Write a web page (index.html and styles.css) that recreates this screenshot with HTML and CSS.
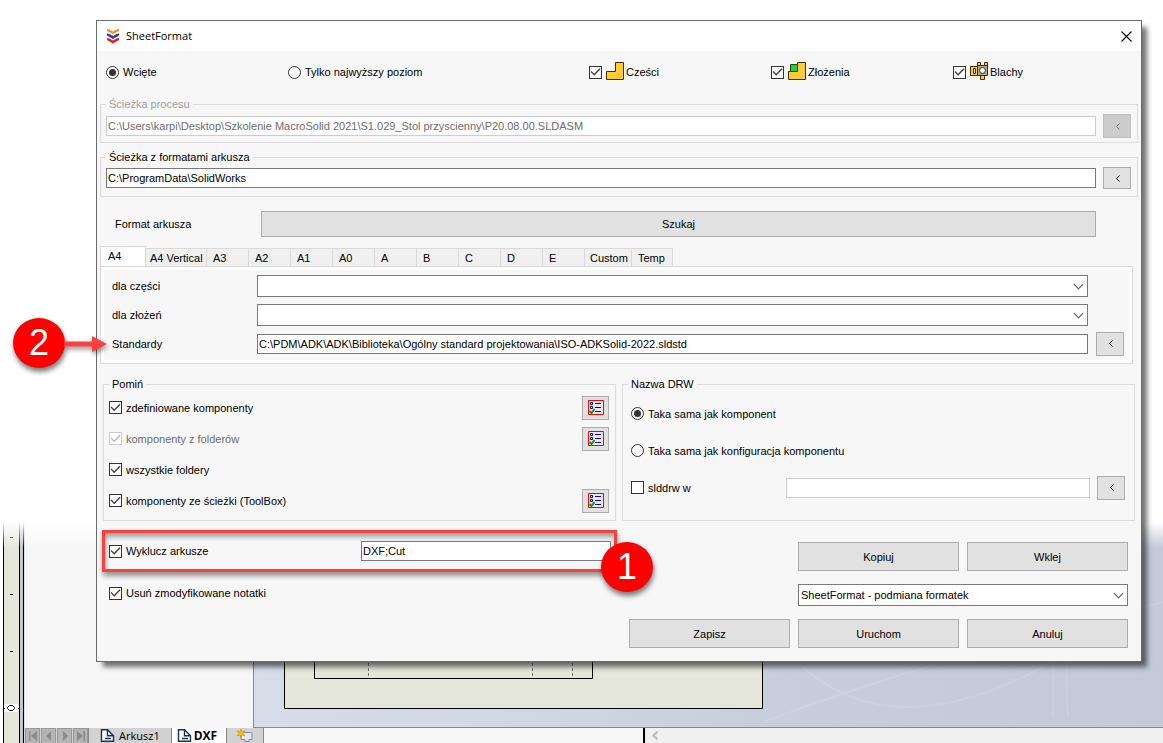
FILE: index.html
```html
<!DOCTYPE html>
<html lang="pl">
<head>
<meta charset="utf-8">
<title>SheetFormat</title>
<link rel="stylesheet" href="styles.css">
</head>
<body>
<svg class="defs" aria-hidden="true">
  <symbol id="list" viewBox="0 0 16 16">
    <path d="M.5.5h15v14H.5z" fill="#e6e6ee" stroke="#f00"/>
    <path d="M2.500 2.500h2v2h-2zM2.500 6.500h2v2h-2z" fill="#fff" stroke="#1a007a"/>
    <path d="M7 3.500h6M7 7.500h6M7 11.500h6" stroke="#1a007a"/>
    <path d="M1.500 11l2 2 3-4" fill="none" stroke="#0a9a1a" stroke-width="2"/>
  </symbol>
  <symbol id="page" viewBox="0 0 15 13">
    <path d="M1.500.7h6l6 6v5.600h-12z" fill="#fff" stroke="#1c2f55" stroke-width="1.400"/>
    <path d="M7.500.7v6h6M5 9.500h6" fill="none" stroke="#1c2f55" stroke-width="1.400"/>
  </symbol>
  <symbol id="lt" viewBox="0 0 5 7"><path d="M4.500.5l-3 3 3 3" fill="none" stroke="currentColor"/></symbol>
</svg>

<aside class="ruler">
  <svg width="15" height="206" viewBox="0 0 15 206" aria-hidden="true">
    <path d="M6 .5h3M6 57.500h3M6 114.500h3" stroke="#000"/>
    <path d="M0 167h14v8H0z" fill="#fff"/>
    <path d="M3.500 170.500l2-2h3l2 2v1l-2 2h-3l-2-2zM0 171.500h1M14 171.500h1" fill="none" stroke="#000"/>
  </svg>
</aside>
<main class="editor">
  <div class="tree"></div>
  <div class="canvas">
    <svg class="swirl" viewBox="0 0 400 180" preserveAspectRatio="none" aria-hidden="true">
      <path d="M40 120q90 80 240 0M0 175q160-60 400-120M290 0v170M305 0q-4 90 0 170M380 120q-20-60 0-120" fill="none" stroke="#e2e6f0" stroke-opacity=".2" stroke-width="2"/>
    </svg>
    <svg class="sheet" width="480" height="180" viewBox="0 0 480 180" aria-hidden="true">
      <path d="M.5 0v179.500h478V0" fill="#e5e6da" stroke="#000"/>
      <path d="M30.500 0v149.500h278V0" fill="none" stroke="#000"/>
      <path d="M84.500 134v15M248.500 134v15M288.500 134v15" stroke="#777" stroke-dasharray="3 2"/>
    </svg>
  </div>
</main>
<footer class="sheetbar">
  <div class="nav">
    <button type="button" aria-label="Pierwszy"><svg width="10" height="12" viewBox="0 0 10 12"><path d="M1 1h1.500v10H1zM9 1v10L3 6z"/></svg></button>
    <button type="button" aria-label="Poprzedni"><svg width="10" height="12" viewBox="0 0 10 12"><path d="M7 1v10L2 6z"/></svg></button>
    <button type="button" aria-label="Następny"><svg width="10" height="12" viewBox="0 0 10 12"><path d="M3 1v10l5-5z"/></svg></button>
    <button type="button" aria-label="Ostatni"><svg width="10" height="12" viewBox="0 0 10 12"><path d="M1 1v10l6-5zM7.500 1H9v10H7.500z"/></svg></button>
  </div>
  <button type="button" class="sheettab"><svg width="15" height="13"><use href="#page"/></svg>Arkusz1</button>
  <button type="button" class="sheettab active"><svg width="15" height="13"><use href="#page"/></svg>DXF</button>
  <button type="button" class="sheettab add" aria-label="Dodaj arkusz">
    <svg width="16" height="14" viewBox="0 0 16 14"><path d="M6 3.500h8q1 0 1 1v6h-3v2H8v-2H4V6" fill="#e4ebf3" stroke="#7b8ca3"/><path d="M4 0l1 3 3-1-2 2.500 2 2.500-3-1-1 3-1-3-3 1 2-2.500L0 2l3 1z" fill="#ffc400" stroke="#e77b00" stroke-width=".6"/></svg>
  </button>
  <div class="hscroll"><svg width="8" height="9" viewBox="0 0 8 9" aria-hidden="true"><path d="M6.500.5l-4 4 4 4" fill="none" stroke="#bbb" stroke-width="2"/></svg></div>
</footer>
<div class="fade"></div>

<form class="dialog">
  <header class="titlebar">
    <svg width="14" height="16" viewBox="0 0 14 16" aria-hidden="true">
      <path d="M1 1l2.500.5L7 3.500l3.500-2L13 1v2L7 6 1 3z" fill="#f6921e"/>
      <path d="M1 5.500l2.500.5L7 8l3.500-2 2.500-.5v2L7 11 1 7.500z" fill="#2d3e9e"/>
      <path d="M1 10l2.500.5L7 12.500l3.500-2 2.500-.5v2l-6 3.500L1 12z" fill="#ed1c24"/>
    </svg>
    <h1>SheetFormat</h1>
    <button type="button" class="close" aria-label="Zamknij"><svg width="11" height="11" viewBox="0 0 11 11"><path d="M.5.5l10 10M10.500.5l-10 10" stroke="#000" stroke-width="1.100"/></svg></button>
  </header>

  <div class="options">
    <label class="choice"><input type="radio" name="level" checked>Wcięte</label>
    <label class="choice"><input type="radio" name="level">Tylko najwyższy poziom</label>
    <label class="choice kind"><input type="checkbox" checked><svg width="18" height="18" viewBox="0 0 18 18"><path d="M.5 9.500h9v-9h8v17H.5z" fill="#ffcc33" stroke="#3d3000"/></svg>Cześci</label>
    <label class="choice kind"><input type="checkbox" checked><svg width="18" height="18" viewBox="0 0 18 18"><path d="M.5 9.500h9v-9h8v17H.5z" fill="#ffcc33" stroke="#3d3000"/><path d="M2.500 2.500h7v7h-7z" fill="#2ecc2e" stroke="#124d12"/></svg>Złożenia</label>
    <label class="choice kind"><input type="checkbox" checked><svg width="18" height="18" viewBox="0 0 18 18"><path d="M.5 4.500h8v9h-8zM7.500.5h3v4h-3zM14.500.5h3v4h-3zM10.500 13.500h4v4h-4z" fill="#ffcc33" stroke="#3d3000"/><path d="M3.500 6.500h2v5h-2z" fill="#ffe488" stroke="#3d3000"/><path d="M7.500 3.500h10v10h-10z" fill="#a8a8a0" stroke="#3d3000"/><circle cx="12.500" cy="8.500" r="3" fill="#fff" stroke="#3d3000"/></svg>Blachy</label>
  </div>

  <fieldset class="group path" disabled>
    <legend>Ścieżka procesu</legend>
    <div class="pathrow">
      <input class="text" type="text" aria-label="Ścieżka procesu" value="C:\Users\karpi\Desktop\Szkolenie MacroSolid 2021\S1.029_Stol przyscienny\P20.08.00.SLDASM">
      <button type="button" class="btn small" aria-label="Wybierz"><svg width="5" height="7"><use href="#lt"/></svg></button>
    </div>
  </fieldset>
  <fieldset class="group path sources">
    <legend>Ścieżka z formatami arkusza</legend>
    <div class="pathrow">
      <input class="text" type="text" aria-label="Ścieżka z formatami arkusza" value="C:\ProgramData\SolidWorks">
      <button type="button" class="btn small" aria-label="Wybierz"><svg width="5" height="7"><use href="#lt"/></svg></button>
    </div>
  </fieldset>

  <div class="search">
    <span>Format arkusza</span>
    <button type="button" class="btn">Szukaj</button>
  </div>

  <div class="tabs" role="tablist">
    <button type="button" role="tab" class="tab selected" aria-selected="true">A4</button>
    <button type="button" role="tab" class="tab wide">A4 Vertical</button>
    <button type="button" role="tab" class="tab">A3</button>
    <button type="button" role="tab" class="tab">A2</button>
    <button type="button" role="tab" class="tab">A1</button>
    <button type="button" role="tab" class="tab">A0</button>
    <button type="button" role="tab" class="tab">A</button>
    <button type="button" role="tab" class="tab">B</button>
    <button type="button" role="tab" class="tab">C</button>
    <button type="button" role="tab" class="tab">D</button>
    <button type="button" role="tab" class="tab">E</button>
    <button type="button" role="tab" class="tab custom">Custom</button>
    <button type="button" role="tab" class="tab temp">Temp</button>
  </div>
  <div class="tabpanel" role="tabpanel">
    <div class="field"><label for="parts">dla części</label><span class="combo"><select id="parts"><option></option></select></span></div>
    <div class="field"><label for="assemblies">dla złożeń</label><span class="combo"><select id="assemblies"><option></option></select></span></div>
    <div class="field">
      <label for="standards">Standardy</label>
      <input id="standards" class="text" type="text" value="C:\PDM\ADK\ADK\Biblioteka\Ogólny standard projektowania\ISO-ADKSolid-2022.sldstd">
      <button type="button" class="btn small" aria-label="Wybierz"><svg width="5" height="7"><use href="#lt"/></svg></button>
      <span class="badge two">2</span>
      <svg class="arrow" width="43" height="16" viewBox="0 0 43 16" aria-hidden="true"><path d="M0 5.500h28V0l15 8-15 8v-5.500H0z" fill="#fb4040"/></svg>
    </div>
  </div>

  <div class="columns">
    <fieldset class="group skip">
      <legend>Pomiń</legend>
      <div class="row"><label class="choice"><input type="checkbox" checked>zdefiniowane komponenty</label><button type="button" class="btn small" aria-label="Lista"><svg width="16" height="15" viewBox="0 0 16 15"><use href="#list" width="16" height="16"/></svg></button></div>
      <div class="row"><label class="choice off"><input type="checkbox" checked disabled>komponenty z folderów</label><button type="button" class="btn small" aria-label="Lista"><svg width="16" height="15" viewBox="0 0 16 15"><use href="#list" width="16" height="16"/></svg></button></div>
      <div class="row"><label class="choice"><input type="checkbox" checked>wszystkie foldery</label></div>
      <div class="row"><label class="choice"><input type="checkbox" checked>komponenty ze ścieżki (ToolBox)</label><button type="button" class="btn small" aria-label="Lista"><svg width="16" height="15" viewBox="0 0 16 15"><use href="#list" width="16" height="16"/></svg></button></div>
    </fieldset>
    <fieldset class="group naming">
      <legend>Nazwa DRW</legend>
      <div class="row"><label class="choice"><input type="radio" name="drw" checked>Taka sama jak komponent</label></div>
      <div class="row"><label class="choice"><input type="radio" name="drw">Taka sama jak konfiguracja komponentu</label></div>
      <div class="row"><label class="choice fixed"><input type="checkbox">slddrw w</label><input class="text pale" type="text" aria-label="slddrw w"><button type="button" class="btn small" aria-label="Wybierz"><svg width="5" height="7"><use href="#lt"/></svg></button></div>
    </fieldset>
  </div>

  <div class="columns bottom">
    <div class="extras">
      <div class="row exclude">
        <label class="choice"><input type="checkbox" checked>Wyklucz arkusze</label>
        <input class="text" type="text" aria-label="Arkusze" value="DXF;Cut">
        <span class="frame"></span>
        <span class="badge one">1</span>
      </div>
      <div class="row"><label class="choice"><input type="checkbox" checked>Usuń zmodyfikowane notatki</label></div>
    </div>
    <div class="actions">
      <button type="button" class="btn copy">Kopiuj</button>
      <button type="button" class="btn">Wklej</button>
      <span class="combo preset"><select aria-label="Ustawienie"><option>SheetFormat - podmiana formatek</option></select></span>
      <button type="button" class="btn">Zapisz</button>
      <button type="button" class="btn">Uruchom</button>
      <button type="button" class="btn">Anuluj</button>
    </div>
  </div>
</form>
</body>
</html>
```

FILE: styles.css
```css
* { box-sizing: border-box; }

body {
  margin: 0;
  min-height: 100vh;
  position: relative;
  display: grid;
  grid-template-columns: 24px 1fr;
  grid-template-rows: 1fr 15px;
  overflow: hidden;
  background: #fff;
  color: #000;
  font: 11px/14px "Liberation Sans", Arial, sans-serif;
}

button, input, select { font: inherit; color: inherit; margin: 0; }
button { padding: 0; border: 0; background: none; }
svg { display: block; flex: none; }
.defs { position: absolute; width: 0; height: 0; }

/* Editor behind the dialog */
.ruler {
  grid-row: 1 / 3;
  margin-left: 3px;
  border-left: 1px solid #000;
  border-right: 1px solid #000;
  background: linear-gradient(90deg, #e5e6da 15px, #000 15px, #000 16px, #c3c7d4 16px);
  display: flex;
  align-items: flex-end;
  overflow: hidden;
}
.editor { display: flex; }
.tree { width: 229px; background: #f7f7f7; border-left: 1px solid #ddd; }
.canvas {
  flex: 1;
  position: relative;
  overflow: hidden;
  border-left: 1px solid #888;
  border-bottom: 1px solid #888;
  background: linear-gradient(100deg, #d9deea 0%, #d3d8e5 35%, #c9cedc 60%, #c4c9d7 100%);
}
.swirl { position: absolute; right: 0; bottom: 0; width: 400px; height: 180px; }
.sheet { position: absolute; left: 30px; bottom: 18px; }
.fade {
  position: absolute;
  inset: 0 0 195px;
  background: linear-gradient(0deg, rgba(255,255,255,0), #fff 26px);
}

.sheetbar { display: flex; overflow: hidden; background: #f7f7f7; font: 11px/14px "Open Sans", "Noto Sans", sans-serif; }
.nav { display: flex; gap: 1px; width: 65px; flex: none; padding-left: 1px; background: #d2d2d2; border-right: 1px solid #888; }
.nav button { width: 15px; height: 16px; background: #b4b4b4; border: 1px solid #999; display: grid; place-items: center; }
.nav path { fill: #8b8b8b; }
.sheettab { display: flex; align-items: center; gap: 4px; padding: 0 11px; background: #d2d2d2; border-right: 1px solid #888; }
.sheettab.active { background: #fff; padding: 0 9px 0 5px; font-weight: bold; font-size: 12px; gap: 2px; }
.sheettab.add { padding: 0 10px; }
.hscroll { margin-left: auto; width: 520px; background: #f0f0f0; border-left: 2px solid #000; padding: 3px 6px; }

/* Dialog */
.dialog {
  position: absolute;
  top: 20px;
  left: 96px;
  right: 21px;
  border: 1px solid #6b6b6b;
  background: #f7f7f7;
  box-shadow: 6px 6px 5px -1px rgba(0,0,0,.55);
}
.titlebar { display: flex; align-items: center; height: 30px; padding: 0 9px; gap: 6px; background: #fff; }
.titlebar h1 { flex: 1; margin: 0; font: 11px/16px "Open Sans", "Noto Sans", sans-serif; }

.options {
  display: grid;
  grid-template-columns: 182fr 301fr 182fr 182fr 182fr;
  align-items: center;
  height: 20px;
  margin: 11px 6px 15px 9px;
}
.choice { display: flex; align-items: center; gap: 4px; white-space: nowrap; }
.kind { gap: 2px; }
.kind input { margin-right: 2px; }
.kind svg { margin-bottom: 2px; }
.choice.off { color: #6d6d6d; }
.choice input {
  appearance: none;
  flex: none;
  width: 13px;
  height: 13px;
  border: 1px solid #333;
  background: #fff;
  display: grid;
  place-items: center;
}
.choice input[type="radio"] { border-radius: 50%; }
.choice input[type="radio"]:checked::before { content: ""; width: 7px; height: 7px; border-radius: 50%; background: #333; }
.choice input[type="checkbox"]:checked::before {
  content: "";
  width: 11px;
  height: 11px;
  background: #444;
  clip-path: polygon(5% 50%, 14% 40%, 38% 65%, 86% 16%, 96% 26%, 38% 84%);
}
.choice input:disabled { border-color: #ccc; }
.choice input[type="checkbox"]:disabled::before { background: #bbb; }

.group { margin: 0; padding: 0; border: 1px solid #dcdcdc; min-width: 0; }
.group legend { padding: 0 3px; }
.group:disabled legend { color: #a0a0a0; }
.path { margin: 0 3px 7px; padding: 3px 6px 4px 5px; }
.sources { margin-bottom: 14px; padding-bottom: 7px; }
.pathrow { display: flex; align-items: center; gap: 7px; height: 24px; }
.sources .pathrow { height: 22px; }
.path .small { width: 27px; }

.text {
  flex: 1;
  min-width: 0;
  height: 20px;
  padding: 0 1px;
  border: 1px solid #7a7a7a;
  border-radius: 0;
  background: #fff;
}
.text.pale, .text:disabled { border-color: #ccc; }
.text:disabled { color: #6d6d6d; }

.btn { border: 1px solid #adadad; background: #e1e1e1; }
.btn.small { flex: none; width: 28px; height: 100%; max-height: 24px; display: grid; place-items: center; }
.btn:disabled { background: #ccc; border-color: #bfbfbf; color: #777; }

.search { display: flex; align-items: center; margin: 0 45px 9px 18px; }
.search span { width: 146px; }
.search .btn { flex: 1; height: 26px; }

.tabs { display: flex; align-items: flex-end; height: 20px; margin-left: 3px; }
.tab {
  width: 42px;
  height: 18px;
  padding: 0 0 0 6px;
  text-align: left;
  background: #f0f0f0;
  border: 1px solid #d9d9d9;
  border-width: 1px 1px 0 0;
}
.tab.selected { width: 46px; height: 20px; padding: 0 0 2px 7px; background: #fff; border-left-width: 1px; }
.tab.wide { width: 61px; padding: 0 0 0 4px; white-space: nowrap; }
.tab.custom { width: 47px; padding-left: 5px; }
.tab.temp { width: 41px; }
.tabpanel {
  margin: 0 8px 13px 3px;
  padding: 4px 8px 5px 8px;
  border: 1px solid #d9d9d9;
  box-shadow: inset 0 0 0 3px #fff;
}
.field { position: relative; display: flex; align-items: center; height: 29px; padding-right: 36px; }
.field > label { width: 148px; flex: none; padding-left: 3px; }
.field > .small { position: absolute; right: 0; height: 24px; }
.combo { position: relative; flex: 1; display: flex; }
.combo select {
  appearance: none;
  width: 100%;
  height: 22px;
  padding: 0 20px 0 2px;
  border: 1px solid #7a7a7a;
  border-radius: 0;
  background: #fff;
}
.combo::after {
  content: "";
  position: absolute;
  right: 6px;
  top: 6px;
  width: 6px;
  height: 6px;
  border: solid #555;
  border-width: 0 1px 1px 0;
  transform: rotate(45deg);
  pointer-events: none;
}

.columns { display: grid; grid-template-columns: 1fr 1fr; gap: 6px; margin: 0 6px; }
.row { display: flex; align-items: center; }
.skip { padding: 1px 6px 4px 5px; }
.skip .row { height: 31px; justify-content: space-between; }
.skip .small { width: 27px; height: 24px; }
.naming { padding: 4px 9px 0 8px; }
.naming legend { margin-left: -3px; }
.naming .row { height: 37px; }
.naming .fixed { width: 155px; }
.naming .small { height: 24px; margin-left: 7px; }

.bottom { margin-top: 19px; margin-bottom: 13px; }
.extras { padding: 0 5px 0 6px; }
.extras .row { height: 22px; margin-bottom: 20px; position: relative; }
.exclude .choice { width: 252px; }
.frame {
  position: absolute;
  inset: -10px -6px -10px -7px;
  border: 3px solid #fb4040;
  box-shadow: 1px 4px 5px rgba(0,0,0,.4), inset 1px 4px 5px rgba(0,0,0,.35);
  pointer-events: none;
}
.badge {
  position: absolute;
  width: 52px;
  height: 50px;
  border-radius: 50%;
  background: #fe0000;
  color: #fff;
  box-shadow: 1px 4px 5px rgba(0,0,0,.5);
  font-size: 36px;
  line-height: 50px;
  text-align: center;
}
.badge.one { right: -42px; top: 2px; }
.badge.two { left: -96px; top: -11px; }
.arrow { position: absolute; left: -45px; top: 7px; filter: drop-shadow(1px 3px 2px rgba(0,0,0,.4)); }

.actions {
  display: grid;
  grid-template-columns: 1fr 1fr 1fr;
  gap: 13px 8px;
  align-content: start;
  padding: 2px 7px 0 7px;
}
.actions .btn { height: 29px; }
.actions .copy { grid-column: 2; }
.preset { grid-column: 2 / 4; }
```
